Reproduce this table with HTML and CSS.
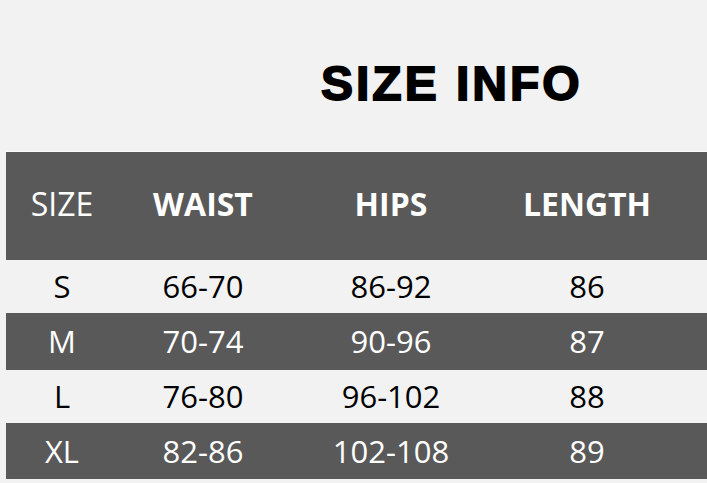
FILE: index.html
```html
<!DOCTYPE html>
<html>
<head>
<meta charset="utf-8">
<link rel="stylesheet" href="styles.css">
</head>
<body>
<div class="page">
  <div class="title-wrap"><h1 class="title">SIZE INFO</h1></div>
  <div class="table">
    <div class="row head">
      <div class="cell reg">SIZE</div>
      <div class="cell">WAIST</div>
      <div class="cell">HIPS</div>
      <div class="cell">LENGTH</div>
    </div>
    <div class="row light r53">
      <div class="cell">S</div><div class="cell">66-70</div><div class="cell">86-92</div><div class="cell">86</div>
    </div>
    <div class="row dark r57">
      <div class="cell">M</div><div class="cell">70-74</div><div class="cell">90-96</div><div class="cell">87</div>
    </div>
    <div class="row light r53">
      <div class="cell">L</div><div class="cell">76-80</div><div class="cell">96-102</div><div class="cell">88</div>
    </div>
    <div class="row dark r56">
      <div class="cell">XL</div><div class="cell">82-86</div><div class="cell">102-108</div><div class="cell">89</div>
    </div>
  </div>
</div>
</body>
</html>
```

FILE: styles.css
```css
html, body {
  margin: 0;
  padding: 0;
  background: #f2f2f2;
}
.page {
  width: 707px;
  height: 483px;
  overflow: hidden;
  background: #f2f2f2;
}
.title-wrap {
  height: 151px;
  box-sizing: border-box;
  padding-top: 60px;
  padding-left: 321px;
}
.title {
  margin: 0;
  font-family: "Liberation Sans", Arial, sans-serif;
  font-weight: 700;
  font-size: 48px;
  line-height: 48px;
  letter-spacing: 3px;
  color: #000;
  -webkit-text-stroke: 1.8px #000;
}
.table {
  margin-left: 6px;
  width: 701px;
  font-family: "Open Sans", "Noto Sans", sans-serif;
  font-size: 31px;
  font-weight: 500;
}
.row {
  display: grid;
  grid-template-columns: 112px 170px 206px 186px 1fr;
  align-items: center;
}
.row .cell {
  text-align: center;
  line-height: 1;
}
.head {
  height: 109px;
  background: #595959;
  color: #fff;
  font-weight: 700;
  font-size: 32px;
  padding-bottom: 4px;
  border-top: 1px solid #fbfbfb;
  box-sizing: border-box;
}
.head .reg {
  font-weight: 400;
}
.light {
  color: #000;
  background: #f2f2f2;
}
.dark {
  color: #fff;
  background: #595959;
}
.r53 { height: 53px; }
.r57 { height: 57px; }
.r56 { height: 56px; }
```
